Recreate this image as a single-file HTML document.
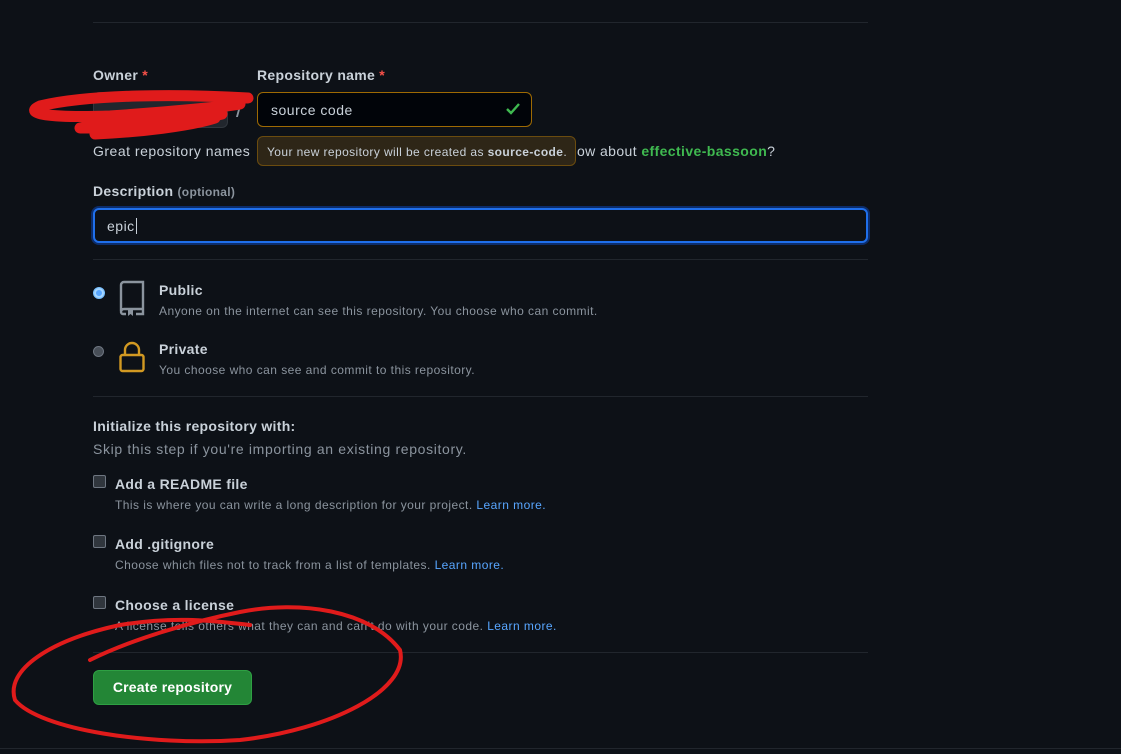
<!DOCTYPE html>
<html><head><meta charset="utf-8"><style>
body{margin:0;width:1121px;height:754px;background:#0d1117;font-family:"Liberation Sans",sans-serif;color:#c9d1d9;position:relative;overflow:hidden;letter-spacing:0.5px}
.a{position:absolute;white-space:nowrap}
.hr{position:absolute;left:93px;width:775px;height:1px;background:#21262d}
.b{font-weight:bold;font-size:14px;color:#c9d1d9;letter-spacing:0.3px}
.s{font-size:12px;color:#8b949e;letter-spacing:0.45px}
.lk{color:#58a6ff}
.cb{position:absolute;width:11px;height:11px;border:1px solid #6e7681;border-radius:2px;background:#30363d}
</style></head><body>
<div class="hr" style="top:22px"></div>
<div class="a b" style="left:93px;top:67px">Owner <span style="color:#f85149">*</span></div>
<div class="a b" style="left:257px;top:67px">Repository name <span style="color:#f85149">*</span></div>
<div class="a" style="left:93px;top:92px;width:135px;height:36px;background:#21262d;border:1px solid #30363d;border-radius:6px;box-sizing:border-box"></div>
<div class="a" style="left:236px;top:96px;font-size:24px;color:#8b949e">/</div>
<div class="a" style="left:257px;top:92px;width:275px;height:35px;border:1px solid #9e6a03;border-radius:6px;background:#010409;box-sizing:border-box"></div>
<div class="a" style="left:271px;top:102px;font-size:14px;color:#c9d1d9">source code</div>
<svg class="a" style="left:505px;top:102px" width="16" height="14" viewBox="0 0 16 14"><path d="M2 7l4 4 8-9" stroke="#3fb950" stroke-width="2.4" fill="none"/></svg>
<div class="a" style="left:93px;top:143px;font-size:14px">Great repository names</div>
<div class="a" style="left:257px;top:136px;width:319px;height:30px;background:#2e2617;border:1px solid #6b4c0f;border-radius:6px;box-sizing:border-box"></div>
<div class="a" style="left:267px;top:145px;font-size:12px;color:#c9d1d9;letter-spacing:0.4px">Your new repository will be created as <b>source-code</b>.</div>
<div class="a" style="left:577px;top:143px;font-size:14px;letter-spacing:0.4px">ow about <b style="color:#3fb950">effective-bassoon</b>?</div>
<div class="a b" style="left:93px;top:183px">Description <span style="font-size:12px;color:#8b949e">(optional)</span></div>
<div class="a" style="left:93px;top:208px;width:775px;height:35px;border:2px solid #1f6feb;border-radius:6px;box-sizing:border-box;background:#0d1117;box-shadow:0 0 0 2px #0c2d6b"></div>
<div class="a" style="left:107px;top:218px;font-size:14px">epic<span style="border-left:1px solid #c9d1d9;margin-left:1px"></span></div>
<div class="hr" style="top:259px"></div>
<div class="a" style="left:93px;top:287px;width:10px;height:10px;border-radius:50%;background:#58a6ff;border:1px solid #79c0ff;box-shadow:inset 0 0 0 2px #a5d6ff"></div>
<svg class="a" style="left:118px;top:280px" width="28" height="36" viewBox="0 0 28 36"><path d="M3 31V5a3 3 0 013-3h19v27H6a3 3 0 00-3 3v0a2 2 0 002 2h3M18 34h7v-5" stroke="#8b949e" stroke-width="2.4" fill="none"/><path d="M10 29v7l2.5-2 2.5 2v-7z" fill="#8b949e"/></svg>
<div class="a b" style="left:159px;top:282px">Public</div>
<div class="a s" style="left:159px;top:304px">Anyone on the internet can see this repository. You choose who can commit.</div>
<div class="a" style="left:93px;top:346px;width:11px;height:11px;border-radius:50%;background:#484f58;border:1px solid #6e7681;box-sizing:border-box"></div>
<svg class="a" style="left:118px;top:340px" width="28" height="34" viewBox="0 0 28 34"><path d="M7 15V10a7 7 0 0114 0v5" stroke="#d29922" stroke-width="2.4" fill="none"/><rect x="2.5" y="15" width="23" height="16" rx="2" stroke="#d29922" stroke-width="2.4" fill="none"/></svg>
<div class="a b" style="left:159px;top:341px">Private</div>
<div class="a s" style="left:159px;top:363px">You choose who can see and commit to this repository.</div>
<div class="hr" style="top:396px"></div>
<div class="a b" style="left:93px;top:418px">Initialize this repository with:</div>
<div class="a" style="left:93px;top:441px;font-size:14px;color:#8b949e;letter-spacing:0.65px">Skip this step if you're importing an existing repository.</div>
<div class="cb" style="left:93px;top:475px"></div>
<div class="a b" style="left:115px;top:476px">Add a README file</div>
<div class="a s" style="left:115px;top:498px">This is where you can write a long description for your project. <span class="lk">Learn more.</span></div>
<div class="cb" style="left:93px;top:535px"></div>
<div class="a b" style="left:115px;top:536px">Add .gitignore</div>
<div class="a s" style="left:115px;top:558px">Choose which files not to track from a list of templates. <span class="lk">Learn more.</span></div>
<div class="cb" style="left:93px;top:596px"></div>
<div class="a b" style="left:115px;top:597px">Choose a license</div>
<div class="a s" style="left:115px;top:619px">A license tells others what they can and can't do with your code. <span class="lk">Learn more.</span></div>
<div class="hr" style="top:652px"></div>
<div class="a" style="left:93px;top:670px;width:159px;height:35px;background:#238636;border:1px solid #2ea043;border-radius:6px;box-sizing:border-box;color:#fff;font-weight:bold;font-size:14px;text-align:center;line-height:33px;letter-spacing:0.2px">Create repository</div>
<div class="hr" style="top:748px;left:0;width:1121px"></div>
<svg class="a" style="left:0;top:0" width="1121" height="754"><g stroke="#e01b1b" fill="none" stroke-linecap="round" stroke-linejoin="round">
<path d="M248 98C180 94 90 94 40 106 22 114 50 118 110 116 170 112 230 106 240 104 200 110 120 120 80 128 130 128 190 122 222 114 170 124 110 132 95 134 140 132 190 126 215 118" stroke-width="11"/>
<path d="M90 660C130 640 190 622 240 612 300 600 370 610 400 650 410 690 330 730 240 740 150 746 40 730 15 700 5 670 50 640 120 625 180 615 220 622 250 625" stroke-width="4"/>
</g></svg>
</body></html>
